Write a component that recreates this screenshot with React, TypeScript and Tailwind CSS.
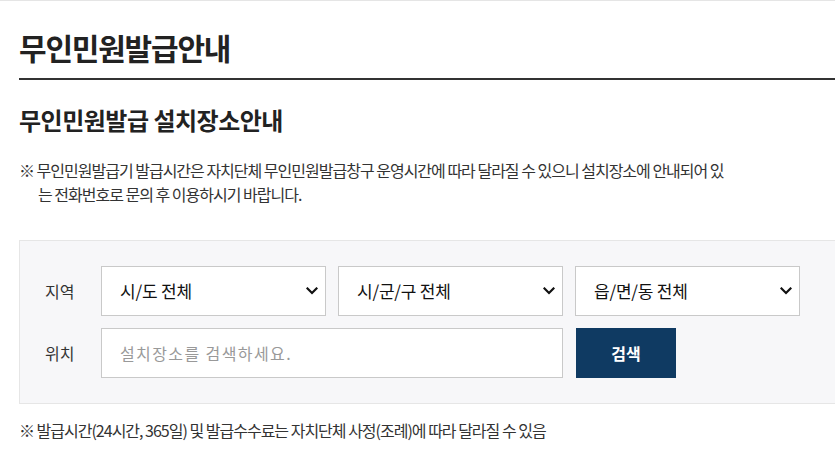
import React from "react";

const Chevron = () => (
  <svg width="12" height="8" viewBox="0 0 12 8" className="pointer-events-none absolute right-[7px] top-1/2 -translate-y-1/2">
    <path d="M1.5 1.5 L6 6 L10.5 1.5" fill="none" stroke="#111" strokeWidth="2.2" strokeLinecap="square" />
  </svg>
);

const Sel = ({ label }: { label: string }) => (
  <div className="relative w-[225px] h-[50px] bg-white border border-[#c9c9c9] flex items-center pl-[18px]">
    <span className="text-[17px] text-[#111] tracking-[-0.2px]">{label}</span>
    <Chevron />
  </div>
);

export default function App() {
  return (
    <div className="w-full min-h-[472px] overflow-hidden bg-white border-t border-[#e5e5e5] text-[#333]" style={{ fontFamily: '"Noto Sans CJK KR", "Noto Sans", sans-serif' }}>
      <div className="ml-[19px] w-[900px]">
        <h1 className="mt-[26px] h-[40px] leading-[40px] text-[30px] font-bold tracking-[-1.2px] text-[#222]">무인민원발급안내</h1>
        <div className="mt-[11px] h-[2px] bg-[#333]" />
        <h2 className="mt-[25px] h-[30px] leading-[30px] text-[24px] font-bold tracking-[-0.5px] text-[#222]">무인민원발급 설치장소안내</h2>
        <p className="mt-[23px] text-[16px] leading-[24px] tracking-[-1px] text-[#333] pl-[19px] -indent-[19px]">
          ※ 무인민원발급기 발급시간은 자치단체 무인민원발급창구 운영시간에 따라 달라질 수 있으니 설치장소에 안내되어 있<br />는 전화번호로 문의 후 이용하시기 바랍니다.
        </p>
        <div className="mt-[34px] bg-[#f7f7f9] border border-[#e6e6e6] pt-[25px] pb-[25px] pl-[25px] flex flex-col gap-[12px]">
          <div className="flex items-center">
            <span className="w-[56px] text-[16px] text-[#333]">지역</span>
            <div className="flex gap-[12px]">
              <Sel label="시/도 전체" />
              <Sel label="시/군/구 전체" />
              <Sel label="읍/면/동 전체" />
            </div>
          </div>
          <div className="flex items-center">
            <span className="w-[56px] text-[16px] text-[#333]">위치</span>
            <div className="w-[462px] h-[50px] bg-white border border-[#c9c9c9] flex items-center pl-[18px]">
              <span className="text-[16px] text-[#999] tracking-[1.4px]">설치장소를 검색하세요.</span>
            </div>
            <button className="ml-[13px] w-[100px] h-[50px] bg-[#0f3a62] text-white text-[16px] font-bold">검색</button>
          </div>
        </div>
        <p className="mt-[14px] text-[16px] leading-[24px] tracking-[-1px] text-[#333]">
          ※ 발급시간(24시간, 365일) 및 발급수수료는 자치단체 사정(조례)에 따라 달라질 수 있음
        </p>
      </div>
    </div>
  );
}
